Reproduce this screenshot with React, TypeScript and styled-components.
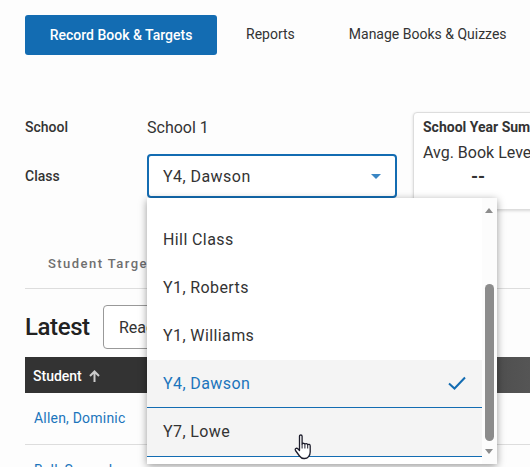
import React from "react";
import styled, { createGlobalStyle } from "styled-components";

const Global = createGlobalStyle`
  html, body { margin: 0; padding: 0; background: #fdfdfd; overflow: hidden; }
  * { box-sizing: border-box; }
  body { font-family: Roboto, "Liberation Sans", sans-serif; color: #333; }
`;

const Page = styled.div`
  position: relative;
  width: 530px;
  height: 467px;
  overflow: hidden;
  padding: 15px 0 0 25px;
`;

const Nav = styled.nav`
  display: flex;
  align-items: center;
  height: 40px;
  width: 600px;
`;

const NavItem = styled.div<{ $active?: boolean }>`
  font-size: 14px;
  white-space: nowrap;
  height: 40px;
  display: flex;
  align-items: center;
  justify-content: center;
  ${(p) =>
    p.$active
      ? `width: 192px; background: #136cb2; color: #fff; border-radius: 3px; font-weight: 500; margin-right: 29px;`
      : `color: #333; margin-right: 54px; padding-bottom: 3px;`}
`;

const FilterArea = styled.div`
  display: flex;
  margin-top: 56px;
  width: 640px;
`;

const Fields = styled.div`
  display: grid;
  grid-template-columns: 122px 250px;
  grid-template-rows: 32px 44px;
  align-items: center;
  row-gap: 11px;
`;

const Label = styled.div`
  font-size: 14px;
  font-weight: 500;
  color: #333;
`;

const Value = styled.div`
  font-size: 16px;
  color: #333;
`;

const SelectBox = styled.div`
  height: 44px;
  border: 2px solid #136cb2;
  border-radius: 4px;
  padding: 0 14px;
  display: flex;
  align-items: center;
  justify-content: space-between;
  font-size: 16px;
  letter-spacing: 0.45px;
  background: #fff;
`;

const Caret = styled.span`
  width: 0;
  height: 0;
  border-left: 5px solid transparent;
  border-right: 5px solid transparent;
  border-top: 5px solid #3a86c4;
`;

const SummaryCard = styled.div`
  margin: 1px 0 0 16px;
  width: 240px;
  height: 98px;
  background: #fff;
  border: 1px solid #ddd;
  border-radius: 4px;
  box-shadow: 0 1px 3px rgba(0, 0, 0, 0.15);
  padding: 6px 9px;
`;

const SummaryTitle = styled.div`
  font-size: 14px;
  font-weight: 700;
  white-space: nowrap;
`;

const SummaryMetric = styled.div`
  font-size: 16px;
  margin-top: 8px;
  white-space: nowrap;
`;

const SummaryValue = styled.div`
  font-size: 18px;
  font-weight: 700;
  width: 110px;
  text-align: center;
  margin-top: 4px;
`;

const Tabs = styled.div`
  margin-top: 40px;
  height: 39px;
  border-bottom: 1px solid #ddd;
  padding: 6px 0 0 23px;
  width: 505px;
`;

const Tab = styled.div`
  font-size: 13px;
  font-weight: 500;
  letter-spacing: 1.45px;
  color: #6f6f6f;
  white-space: nowrap;
`;

const Heading = styled.div`
  display: flex;
  align-items: center;
  margin-top: 16px;
  height: 44px;
`;

const Title = styled.div`
  font-size: 24px;
  font-weight: 500;
  letter-spacing: -0.4px;
  color: #222;
  width: 78px;
`;

const ReadSelect = styled.div`
  width: 200px;
  height: 44px;
  border: 1px solid #999;
  border-radius: 4px;
  padding: 0 15px;
  display: flex;
  align-items: center;
  font-size: 16px;
  background: #fff;
`;

const TableHead = styled.div`
  margin-top: 8px;
  width: 505px;
  height: 36px;
  background: linear-gradient(90deg, #333 0, #333 60%, #555 100%);
  color: #fff;
  display: flex;
  align-items: center;
  gap: 7px;
  padding: 1px 0 0 8px;
  font-size: 14px;
  font-weight: 500;
`;

const Row = styled.div`
  width: 505px;
  height: 52px;
  border-bottom: 1px solid #ddd;
  padding: 17px 0 0 9px;
  font-size: 14px;
  letter-spacing: 0.2px;
  color: #1b75bc;
`;

const Menu = styled.div`
  position: absolute;
  left: 147px;
  top: 198px;
  width: 350px;
  height: 266px;
  background: #fff;
  box-shadow: 0 2px 8px rgba(0, 0, 0, 0.4);
  display: flex;
`;

const MenuList = styled.div`
  flex: 1;
  padding-top: 18px;
  display: flex;
  flex-direction: column;
`;

const Option = styled.div<{ $selected?: boolean; $hover?: boolean }>`
  height: ${(p) => (p.$hover ? "49px" : "48px")};
  flex: none;
  display: flex;
  align-items: center;
  justify-content: space-between;
  padding: 0 16px ${(p) => (p.$hover ? "2px" : "1px")};
  font-size: 16px;
  letter-spacing: 0.4px;
  color: ${(p) => (p.$selected ? "#1b75bc" : "#333")};
  background: ${(p) => (p.$selected || p.$hover ? "#f4f4f4" : "#fff")};
  border-bottom: 1px solid ${(p) => (p.$selected || p.$hover ? "#136cb2" : "#fff")};
`;

const Scrollbar = styled.div`
  position: relative;
  width: 15px;
  background: #fcfcfc;
`;

const Thumb = styled.div`
  position: absolute;
  left: 3px;
  top: 86px;
  width: 9px;
  height: 157px;
  border-radius: 5px;
  background: #8c8c8c;
`;

const Arrow = styled.span<{ $up?: boolean }>`
  position: absolute;
  left: 3px;
  width: 0;
  height: 0;
  border-left: 4.5px solid transparent;
  border-right: 4.5px solid transparent;
  ${(p) =>
    p.$up
      ? `top: 10px; border-bottom: 5px solid #8c8c8c;`
      : `bottom: 10px; border-top: 5px solid #8c8c8c;`}
`;

const CursorIcon = styled.svg`
  position: absolute;
  left: 294px;
  top: 434px;
`;

export default function App() {
  return (
    <Page>
      <Global />
      <Nav>
        <NavItem $active>Record Book &amp; Targets</NavItem>
        <NavItem>Reports</NavItem>
        <NavItem>Manage Books &amp; Quizzes</NavItem>
      </Nav>
      <FilterArea>
        <Fields>
          <Label>School</Label>
          <Value>School 1</Value>
          <Label>Class</Label>
          <SelectBox>
            Y4, Dawson
            <Caret />
          </SelectBox>
        </Fields>
        <SummaryCard>
          <SummaryTitle>School Year Summary</SummaryTitle>
          <SummaryMetric>Avg. Book Level</SummaryMetric>
          <SummaryValue>--</SummaryValue>
        </SummaryCard>
      </FilterArea>
      <Tabs>
        <Tab>Student Targets</Tab>
      </Tabs>
      <Heading>
        <Title>Latest</Title>
        <ReadSelect>Reading</ReadSelect>
      </Heading>
      <TableHead>
        Student
        <svg width="11" height="12" viewBox="0 0 11 12" fill="none" stroke="#ccc" strokeWidth="2">
          <path d="M5.5 12V1.5M1 6l4.5-4.5L10 6" />
        </svg>
      </TableHead>
      <Row>Allen, Dominic</Row>
      <Row>Bell, Samuel</Row>
      <Menu>
        <MenuList>
          <Option>Hill Class</Option>
          <Option>Y1, Roberts</Option>
          <Option>Y1, Williams</Option>
          <Option $selected>
            Y4, Dawson
            <svg width="18" height="14" viewBox="0 0 18 14" fill="none" stroke="#136cb2" strokeWidth="2">
              <path d="M1 7.5l5.5 5L17 1.5" />
            </svg>
          </Option>
          <Option $hover>Y7, Lowe</Option>
        </MenuList>
        <Scrollbar>
          <Arrow $up />
          <Thumb />
          <Arrow />
        </Scrollbar>
      </Menu>
      <CursorIcon width="20" height="26" viewBox="0 0 19 26">
        <path
          d="M5 2.200c0-1.600 2.600-1.600 2.600 0V10c.6-1 2.400-1 2.800.2.7-.9 2.400-.8 2.800.5.8-.7 2.500-.3 2.500 1.200V18c0 3.500-2.300 6.500-5.700 6.500H9.500c-2.200 0-3.400-1-4.500-2.500L1 16.500c-.9-1.500.9-3 2.300-1.700L5 16.500Z"
          fill="#fff"
          stroke="#1d1d2b"
          strokeWidth="1.300"
          strokeLinejoin="round"
        />
        <path d="M7.600 10v4.500M10.400 10.500v4M13.200 11v3.500" stroke="#1d1d2b" strokeWidth="1" fill="none" />
      </CursorIcon>
    </Page>
  );
}
